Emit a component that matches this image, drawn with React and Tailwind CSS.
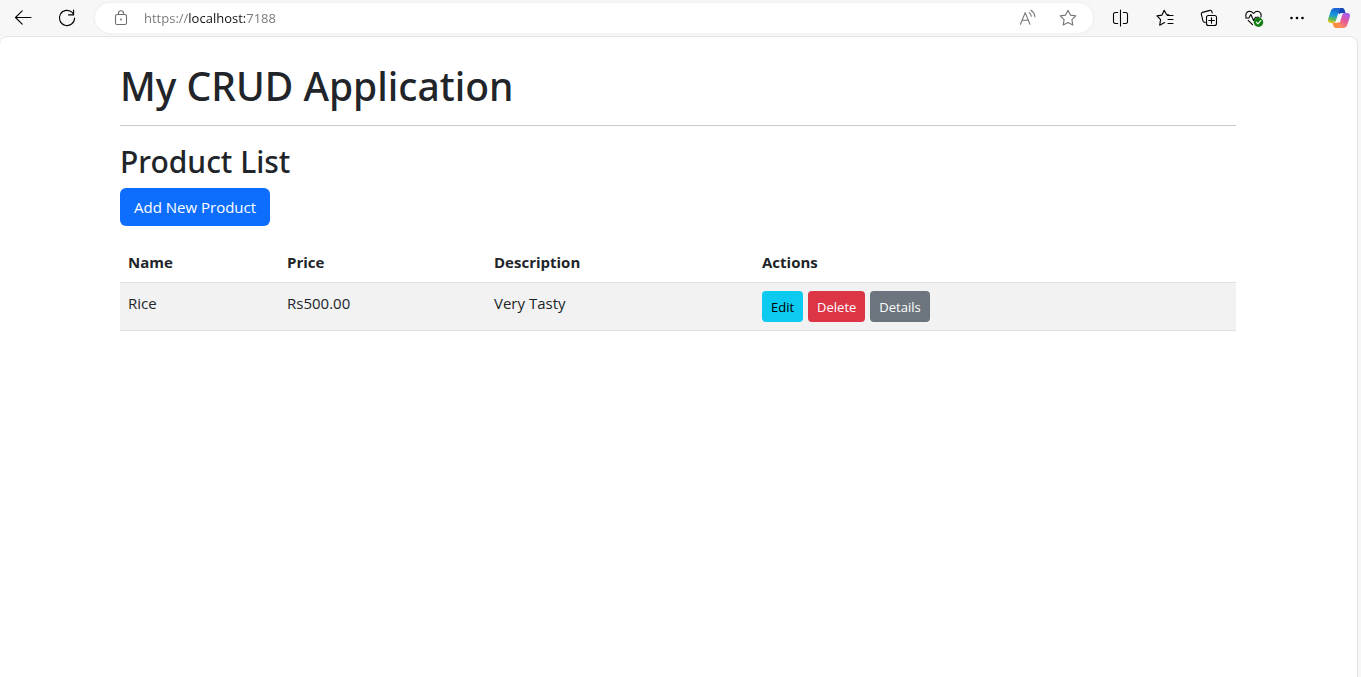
import React from "react";

function Icon({ children, className = "" }) {
  return (
    <svg
      viewBox="0 0 24 24"
      className={`size-6 shrink-0 ${className}`}
      fill="none"
      stroke="currentColor"
      strokeWidth="1.1"
      strokeLinecap="round"
      strokeLinejoin="round"
      aria-hidden="true"
    >
      {children}
    </svg>
  );
}

function ToolButton({ label, className = "w-11", children }) {
  return (
    <button
      type="button"
      aria-label={label}
      className={`flex h-9 shrink-0 items-center justify-center ${className}`}
    >
      {children}
    </button>
  );
}

function BackIcon() {
  return (
    <Icon>
      <path d="M20 11.5H4.600M11.200 4.800 4.500 11.500l6.700 6.700" />
    </Icon>
  );
}

function ReloadIcon() {
  return (
    <Icon>
      <path d="M19.600 12a7.600 7.600 0 1 1-2.100-5.300l1.100 1.800M18.600 4v4.900h-5" />
    </Icon>
  );
}

function LockIcon() {
  return (
    <Icon className="text-[#6e6e6e]">
      <rect x="6.500" y="8.500" width="11" height="10" rx="1.600" />
      <path d="M9.500 8.500V7.200a2.500 2.500 0 0 1 5 0v1.300" />
      <circle cx="12" cy="13.500" r="0.900" fill="currentColor" stroke="none" />
    </Icon>
  );
}

function ReadAloudIcon() {
  return (
    <Icon className="text-[#767676]">
      <path d="m4.500 18.200 4.700-11.600 4.700 11.600M6.100 14.200h6.200M13.200 6.600c1.300.9 2 2.100 2.100 3.700M14.900 4.200c2.400 1.500 3.800 3.600 4 6.500" />
    </Icon>
  );
}

function StarIcon() {
  return (
    <Icon className="text-[#767676]">
      <path d="m12 4.200 2.400 4.900 5.400.8-3.900 3.800.9 5.400-4.800-2.500-4.800 2.500.9-5.400-3.900-3.800 5.400-.8z" />
    </Icon>
  );
}

function SplitIcon() {
  return (
    <Icon>
      <path d="M8.700 6.500H6A1.800 1.800 0 0 0 4.500 8.300V15.700A1.800 1.800 0 0 0 6 17.500h2.700M14.300 6.500H17a1.800 1.800 0 0 1 1.500 1.800v7.400a1.800 1.800 0 0 1-1.500 1.800h-2.700M11.500 4v16" />
    </Icon>
  );
}

function FavoritesIcon() {
  return (
    <Icon>
      <path d="m15.700 8.800-2.200-.2-2.300-4.400-2.200 4.900-5 .8 3.600 3.800-.9 5.500 4.900-2.600M14.500 9.500h5.500M15 13.500h5M15 17.500h5" />
    </Icon>
  );
}

function CollectionsIcon() {
  return (
    <Icon>
      <path d="M8.200 16.600 7 16.100a1.500 1.500 0 0 1-1-1.100L4.400 8.300a1.500 1.500 0 0 1 1-1.900l7.500-2a1.500 1.500 0 0 1 1.900 1l.4 1.500" />
      <rect x="9.500" y="9.500" width="10" height="10" rx="2" />
      <path d="M14.500 11.700v5.600M11.700 14.500h5.600" />
    </Icon>
  );
}

function HealthIcon() {
  return (
    <Icon>
      <path d="M5 11.200C4.300 8.500 5.300 5.300 8.500 5.200c1.700 0 2.900 1 4 2.300 1.100-1.300 2.300-2.300 4-2.300 3.200.1 4.200 3.300 3.400 6" />
      <path d="M4.700 12h3.200l2-3.500 2.700 6 2-3.300h3.200M7.200 14.400l4.300 4.300" />
      <circle cx="17.500" cy="16.200" r="4.700" fill="#107c10" stroke="none" />
      <path d="m15.300 16.200 1.600 1.600 3-3.200" stroke="#fff" />
    </Icon>
  );
}

function MoreIcon() {
  return (
    <Icon>
      <g fill="currentColor" stroke="none">
        <circle cx="6.500" cy="12" r="1.300" />
        <circle cx="12" cy="12" r="1.300" />
        <circle cx="17.500" cy="12" r="1.300" />
      </g>
    </Icon>
  );
}

function CopilotIcon() {
  return (
    <Icon>
      <defs>
        <linearGradient id="cool" x1="0.500" y1="0" x2="0.300" y2="1">
          <stop offset="0" stopColor="#1b5fd0" />
          <stop offset="0.450" stopColor="#1597e0" />
          <stop offset="0.750" stopColor="#58b95f" />
          <stop offset="1" stopColor="#f2c616" />
        </linearGradient>
        <linearGradient id="warm" x1="0.700" y1="0" x2="0.300" y2="1">
          <stop offset="0" stopColor="#a55cf0" />
          <stop offset="0.450" stopColor="#e0569f" />
          <stop offset="1" stopColor="#ff9256" />
        </linearGradient>
      </defs>
      <g stroke="none">
        <path
          fill="#1746b8"
          d="M13 2h2.300c1.200 0 1.900.8 2.300 1.900l1.100 3.400h-3.200c-1.300 0-2.300.8-2.700 2l-2-3z"
        />
        <path
          fill="#fb8a3c"
          d="M11 22H8.800c-1.200 0-1.900-.8-2.300-1.900l-1.100-3.300h3.200c1.300 0 2.300-.8 2.700-2l2 3z"
        />
        <path
          fill="url(#cool)"
          d="M7.700 2h6.600c-1.300.3-1.800 1.200-2.200 2.500l-3 9.600c-.6 1.800-1.400 2.800-3.200 2.800H3.800c-2.600 0-3.300-2-2.500-4.500l2.600-7.700C4.500 3 5.800 2 7.700 2z"
        />
        <path
          fill="url(#warm)"
          d="M16.300 22H9.700c1.300-.3 1.800-1.200 2.200-2.500l3-9.600c.6-1.800 1.400-2.800 3.200-2.800h2.100c2.600 0 3.300 2 2.500 4.500l-2.600 7.700c-.6 1.700-1.900 2.700-3.800 2.700z"
        />
        <path
          fill="#f7f7f7"
          d="M13.300 7.300h2.500c-.9.500-1.300 1.400-1.700 2.600l-1.300 4.300c-.5 1.700-1.300 2.600-2.900 2.600H8.400c.9-.5 1.400-1.200 1.800-2.500l1.200-4.200c.4-1.400.9-2.300 1.900-2.800z"
        />
      </g>
    </Icon>
  );
}

function BrowserBar() {
  return (
    <header className="flex h-9 items-center pl-px text-black">
      <ToolButton label="Back">
        <BackIcon />
      </ToolButton>
      <ToolButton label="Refresh">
        <ReloadIcon />
      </ToolButton>
      <div className="mx-1.5 flex h-[30px] min-w-0 flex-1 items-center rounded-full bg-white pr-[5px] pl-3.5 shadow-[0_0_3px_#e4e4e4]">
        <LockIcon />
        <input
          type="text"
          aria-label="Address"
          defaultValue="https://localhost:7188"
          className="ml-[11px] h-5 min-w-0 flex-1 bg-[linear-gradient(90deg,#767676_45px,#111_45px,#111_101px,#767676_101px)] bg-clip-text text-[13px] leading-5 text-transparent outline-none"
        />
        <ToolButton label="Read aloud" className="w-10">
          <ReadAloudIcon />
        </ToolButton>
        <ToolButton label="Add to favorites" className="w-10">
          <StarIcon />
        </ToolButton>
      </div>
      <ToolButton label="Split screen">
        <SplitIcon />
      </ToolButton>
      <ToolButton label="Favorites">
        <FavoritesIcon />
      </ToolButton>
      <ToolButton label="Collections">
        <CollectionsIcon />
      </ToolButton>
      <ToolButton label="Browser essentials">
        <HealthIcon />
      </ToolButton>
      <ToolButton label="More">
        <MoreIcon />
      </ToolButton>
      <ToolButton label="Copilot" className="w-[42px] pr-0.5">
        <CopilotIcon />
      </ToolButton>
    </header>
  );
}

const products = [{ name: "Rice", price: "Rs500.00", description: "Very Tasty" }];

const smallButton = "inline-flex h-[31px] items-center rounded px-[9px] text-[13px]";

function ProductTable() {
  return (
    <table className="mt-4 w-full table-fixed text-left text-[15px] leading-6">
      <thead>
        <tr className="border-b border-[#dee2e6]">
          <th className="w-[159px] p-2 font-bold">Name</th>
          <th className="w-[207px] p-2 font-bold">Price</th>
          <th className="w-[268px] p-2 font-bold">Description</th>
          <th className="p-2 font-bold">Actions</th>
        </tr>
      </thead>
      <tbody>
        {products.map((p) => (
          <tr key={p.name} className="border-b border-[#dee2e6] bg-[#f2f2f2] align-top">
            <td className="p-2">{p.name}</td>
            <td className="p-2">{p.price}</td>
            <td className="p-2">{p.description}</td>
            <td className="p-2">
              <div className="flex gap-[5px]">
                <a href="#edit" className={`${smallButton} bg-[#0dcaf0] text-black`}>
                  Edit
                </a>
                <a href="#delete" className={`${smallButton} bg-[#dc3545] text-white`}>
                  Delete
                </a>
                <a href="#details" className={`${smallButton} bg-[#6c757d] text-white`}>
                  Details
                </a>
              </div>
            </td>
          </tr>
        ))}
      </tbody>
    </table>
  );
}

export default function App() {
  return (
    <div className="flex min-h-screen flex-col bg-[#f7f7f7] font-['Open_Sans',sans-serif] text-[#212529]">
      <BrowserBar />
      <main className="mr-[3px] flex-1 rounded-t-lg border-t border-r border-[#e5e5e5] bg-white pt-6 pr-px">
        <div className="mx-auto max-w-[1140px] px-3">
          <h1 className="font-['Noto_Sans',sans-serif] text-[39px] leading-[50px] font-medium">
            My CRUD Application
          </h1>
          <hr className="mt-3.5 mb-4 border-[#c8c9ca]" />
          <h2 className="mb-1.5 font-['Noto_Sans',sans-serif] text-[30px] leading-[40px] font-medium">
            Product List
          </h2>
          <a
            href="#new"
            className="inline-flex h-[38px] items-center rounded-md bg-[#0d6efd] px-[14px] text-[15px] text-white"
          >
            Add New Product
          </a>
          <ProductTable />
        </div>
      </main>
    </div>
  );
}
